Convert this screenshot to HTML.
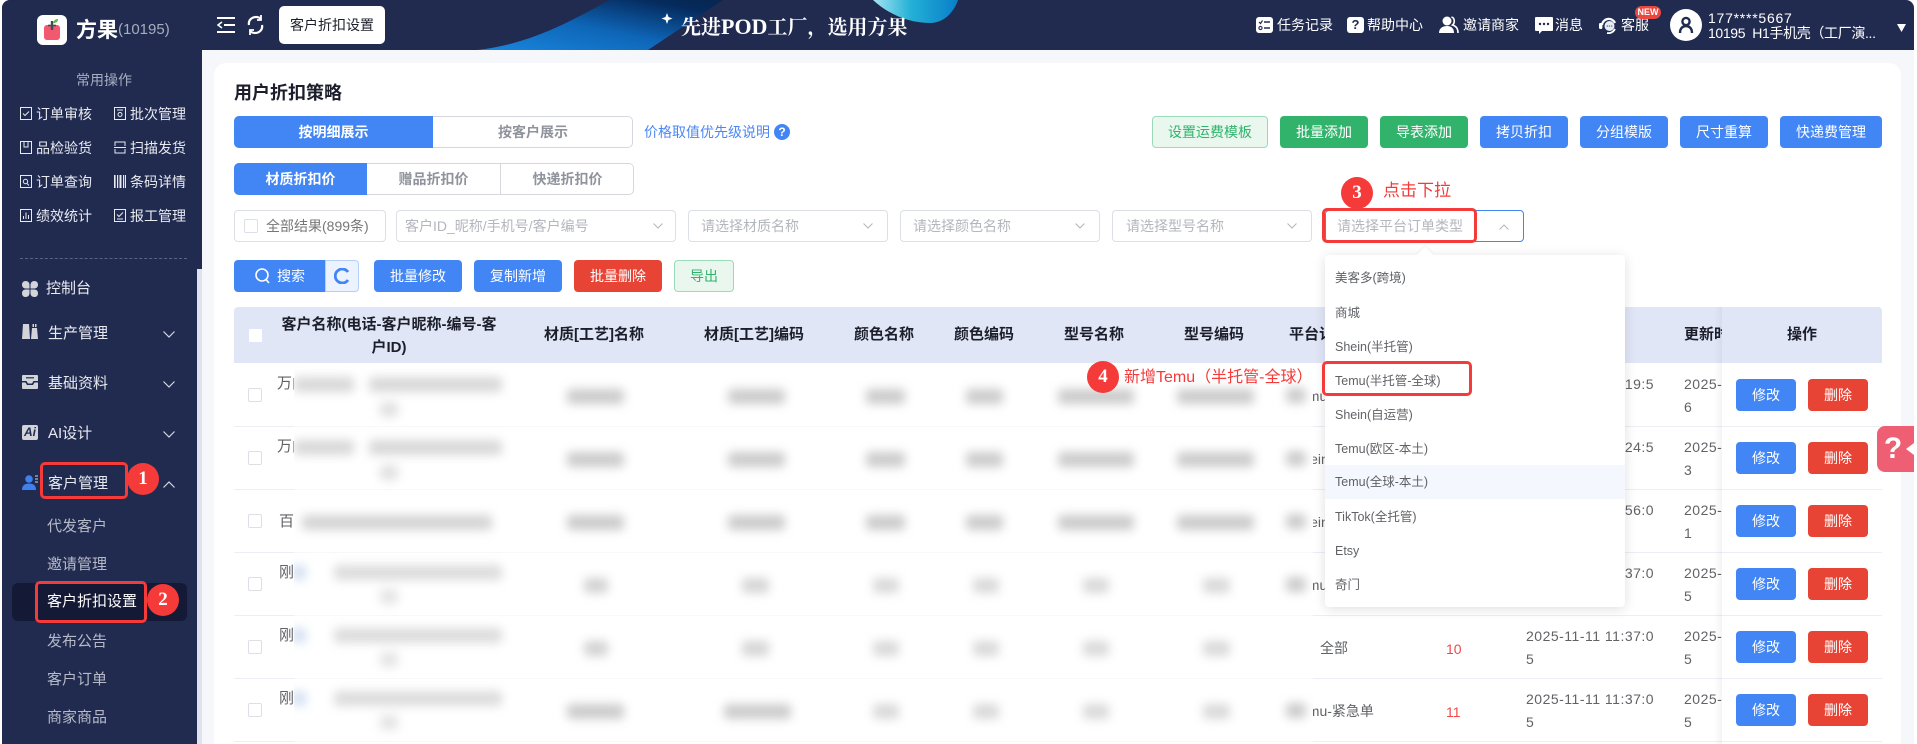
<!DOCTYPE html>
<html lang="zh-CN">
<head>
<meta charset="utf-8">
<title>客户折扣设置</title>
<style>
*{box-sizing:border-box}
html,body{margin:0;padding:0;background:#fff}
body{width:1917px;height:744px;overflow:hidden;position:relative;font-family:"Liberation Sans","Noto Sans CJK SC",sans-serif;font-size:14px;color:#606266}
div,span,svg{position:absolute}
span.in{position:static}
.t{position:absolute;line-height:20px;white-space:nowrap}
.w{color:#fff}
.q{color:#e8eaf0;font-size:14px}
.m{color:#e8eaf0;font-size:15px}
.s{color:#b6bac8;font-size:15px}
.btn{position:absolute;height:32px;line-height:32px;text-align:center;color:#fff;border-radius:4px;font-size:14px;white-space:nowrap}
.bl{background:#4285f4}
.gr{background:#31b36b}
.re{background:#e84435}
.lg{background:#e9f7ef;border:1px solid #9bdab9;color:#31b36b;line-height:30px}
.sel{position:absolute;height:32px;top:210px;background:#fff;border:1px solid #dcdfe6;border-radius:4px}
.ph{color:#b3b6bd;font-size:14px}
.th{position:absolute;top:325px;line-height:20px;font-size:15px;font-weight:700;color:#1c1f2b;white-space:nowrap;text-align:center}
.cb{position:absolute;left:248px;width:14px;height:14px;background:#fff;border:1px solid #dcdfe6;border-radius:2px}
.ln{position:absolute;height:1px;background:#ebeef5}
.f{position:absolute;left:294px;width:1019px;height:1px;background:#f8f8fa}
.b{position:absolute;height:15px;background:#cbcbcb;filter:blur(5px);border-radius:4px}
.rb{position:absolute;border:3.5px solid #f53a3a;border-radius:5px;z-index:30}
.c{position:absolute;width:32px;height:32px;border-radius:50%;background:#f53a3a;color:#fff;text-align:center;line-height:32px;font-family:"Liberation Serif",serif;font-weight:700;font-size:19px;z-index:31}
.ann{position:absolute;color:#f53a3a;white-space:nowrap;line-height:22px;z-index:31}
.it{position:absolute;left:0;width:300px;height:34px;line-height:34px;padding-left:10px;font-size:12.5px;color:#606266;white-space:nowrap}
.date{position:absolute;font-size:14px;letter-spacing:.5px;line-height:20px;white-space:nowrap}
</style>
</head>
<body>

<!-- page background -->
<div style="left:202px;top:50px;width:1712px;height:694px;background:#f5f7fb"></div>
<div style="left:214px;top:63px;width:1687px;height:681px;background:#fff;border-radius:12px 12px 0 0"></div>

<!-- top bar -->
<div style="left:2px;top:0;width:1912px;height:50px;background:#212b50;border-radius:8px 8px 0 0;overflow:hidden">
  <svg style="left:0;top:0" width="1912" height="50" viewBox="0 0 1912 50">
    <defs>
      <linearGradient id="g1" x1="0" y1="1" x2="1" y2="0">
        <stop offset="0" stop-color="#1a86dc"/><stop offset=".45" stop-color="#0e66b8"/><stop offset=".85" stop-color="#052a5c"/><stop offset="1" stop-color="#08264f"/>
      </linearGradient>
      <linearGradient id="g2" x1="0" y1="0" x2="1" y2="0">
        <stop offset="0" stop-color="#a6e4f0"/><stop offset=".45" stop-color="#22b0d6"/><stop offset="1" stop-color="#0a7ec8"/>
      </linearGradient>
    </defs>
    <path d="M475 50C530 44 570 20 608 0H721L646 50Z" fill="url(#g1)"/>
    <path d="M871 0C885 13 905 23 928 23C942 23 952 12 956 0Z" fill="url(#g2)"/>
    <path d="M665 13L666.5 17L670.5 18.5L666.5 20L665 24L663.5 20L659.5 18.5L663.5 17Z" fill="#fff"/>
  </svg>
</div>

<!-- sidebar -->
<div style="left:2px;top:0;width:200px;height:744px;background:#212b50;border-radius:8px 0 0 0"></div>
<div style="left:197px;top:269px;width:5px;height:475px;background:#dfe3ee"></div>

<!-- logo -->
<div style="left:37px;top:15px;width:30px;height:30px;background:#fff;border-radius:6px"></div>
<svg style="left:37px;top:15px" width="30" height="30" viewBox="0 0 30 30">
  <rect x="7" y="10" width="16" height="15" rx="3" fill="#f2596e"/>
  <path d="M15 6V15" stroke="#444b5c" stroke-width="2.4"/>
  <path d="M11 10.5H19" stroke="#444b5c" stroke-width="1.6"/>
  <path d="M16 8C17 5 19 4 21 4C21 7 19 8 16 8Z" fill="#5fb548"/>
</svg>
<div class="t w" style="left:76px;top:18px;font-size:21px;font-weight:700;line-height:26px">方果</div>
<div class="t" style="left:118px;top:20px;font-size:15px;color:#a8adbc">(10195)</div>

<!-- top left tools -->
<svg style="left:217px;top:16px" width="19" height="18" viewBox="0 0 19 18" fill="none" stroke="#fff" stroke-width="2">
  <path d="M0 2H18M7 9H18M0 16H18"/><path d="M5 6L1 9L5 12" stroke-width="1.6"/>
</svg>
<svg style="left:246px;top:15px" width="19" height="20" viewBox="0 0 19 20" fill="none" stroke="#fff" stroke-width="2.2">
  <path d="M3 10C2 5 6 2 10 2C12 2 14 3 15 4"/><path d="M16 10C17 15 13 18 9 18C7 18 5 17 4 16"/>
  <path d="M15 0V5H11" stroke-width="1.8"/><path d="M4 20V15H8" stroke-width="1.8"/>
</svg>
<div style="left:279px;top:6px;width:106px;height:38px;background:#fff;border-radius:5px"></div>
<div class="t" style="left:279px;top:15px;width:106px;text-align:center;color:#1c1f2b;font-size:14px">客户折扣设置</div>

<!-- banner title -->
<div class="t w" style="left:681px;top:13px;font-family:'Liberation Serif','Noto Serif CJK SC',serif;font-weight:700;font-size:20px;line-height:28px">先进<span class="in" style="font-size:22px">POD</span>工厂，选用方果</div>

<!-- top right -->
<svg style="left:1256px;top:17px" width="17" height="16" viewBox="0 0 17 16">
  <rect width="17" height="16" rx="3" fill="#fff"/>
  <path d="M8 5H14M8 11H14" stroke="#212b50" stroke-width="1.4"/>
  <path d="M3 5L4.5 6.5L6.5 3.5" stroke="#212b50" stroke-width="1.2" fill="none"/>
  <circle cx="4.5" cy="11" r="1.6" fill="none" stroke="#212b50" stroke-width="1.1"/>
</svg>
<div class="t w" style="left:1277px;top:15px">任务记录</div>
<div style="left:1347px;top:17px;width:17px;height:16px;background:#fff;border-radius:3px;color:#212b50;font-weight:700;font-size:13px;line-height:16px;text-align:center">?</div>
<div class="t w" style="left:1367px;top:15px">帮助中心</div>
<svg style="left:1439px;top:16px" width="20" height="17" viewBox="0 0 20 17">
  <circle cx="8" cy="5" r="4.5" fill="#fff"/><path d="M0 17C0 12 4 10 8 10C12 10 15 12 15 17Z" fill="#fff"/>
  <path d="M12.5 1C16 2 16 7 13.5 9C17 10 19 13 19 17" fill="none" stroke="#fff" stroke-width="1.6"/>
</svg>
<div class="t w" style="left:1463px;top:15px">邀请商家</div>
<svg style="left:1535px;top:17px" width="18" height="17" viewBox="0 0 18 17">
  <path d="M1 0H17A1 1 0 0 1 18 1V13A1 1 0 0 1 17 14H7L4 17V14H1A1 1 0 0 1 0 13V1A1 1 0 0 1 1 0Z" fill="#fff"/>
  <circle cx="5" cy="7" r="1.2" fill="#212b50"/><circle cx="9" cy="7" r="1.2" fill="#212b50"/><circle cx="13" cy="7" r="1.2" fill="#212b50"/>
</svg>
<div class="t w" style="left:1555px;top:15px">消息</div>
<svg style="left:1599px;top:17px" width="19" height="17" viewBox="0 0 19 17" fill="none">
  <path d="M3 8A6.8 6.8 0 0 1 16 6" stroke="#fff" stroke-width="2.2"/>
  <circle cx="10.5" cy="9" r="5" fill="#e6ebf5"/>
  <rect x="0" y="6" width="3.4" height="6" rx="1.2" fill="#fff"/>
  <path d="M8 16C11 16.5 14 15.5 16 12" stroke="#fff" stroke-width="1.8"/>
  <circle cx="8.3" cy="9" r=".8" fill="#6a7598"/><circle cx="10.5" cy="9" r=".8" fill="#6a7598"/><circle cx="12.7" cy="9" r=".8" fill="#6a7598"/>
</svg>
<div class="t w" style="left:1621px;top:15px">客服</div>
<div style="left:1635px;top:6px;width:26px;height:13px;background:#e9473f;border-radius:7px;color:#fff;font-size:9px;font-weight:700;line-height:13px;text-align:center">NEW</div>
<div style="left:1670px;top:9px;width:32px;height:32px;background:#fff;border-radius:50%"></div>
<svg style="left:1678px;top:16px" width="16" height="18" viewBox="0 0 16 18" fill="none" stroke="#212b50" stroke-width="2.4">
  <circle cx="8" cy="5.5" r="3.6"/><path d="M2 17C2 12 5 10 8 10C11 10 14 12 14 17"/>
</svg>
<div class="t w" style="left:1708px;top:8px;font-size:14px;letter-spacing:.75px">177****5667</div>
<div class="t w" style="left:1708px;top:23px;font-size:14px;letter-spacing:-.35px">10195&nbsp; H1手机壳（工厂演...</div>
<svg style="left:1897px;top:24px" width="9" height="8" viewBox="0 0 9 8"><path d="M0 0H9L4.5 8Z" fill="#fff"/></svg>

<!-- quick ops -->
<div class="t" style="left:76px;top:70px;color:#a9aec0;font-size:14px">常用操作</div>
<svg style="left:20px;top:107px" width="12" height="13" viewBox="0 0 12 13" fill="none" stroke="#e8eaf0"><rect x=".5" y=".5" width="11" height="12"/><path d="M3 6.5L5 8.5L9 4.5"/></svg>
<div class="t q" style="left:36px;top:104px">订单审核</div>
<svg style="left:114px;top:107px" width="12" height="13" viewBox="0 0 12 13" fill="none" stroke="#e8eaf0"><rect x=".5" y=".5" width="11" height="12"/><path d="M3 3H9"/><circle cx="6" cy="7.5" r="2"/></svg>
<div class="t q" style="left:130px;top:104px">批次管理</div>
<svg style="left:20px;top:141px" width="12" height="13" viewBox="0 0 12 13" fill="none" stroke="#e8eaf0"><rect x=".5" y=".5" width="11" height="12"/><path d="M4 1V6H8V1"/></svg>
<div class="t q" style="left:36px;top:138px">品检验货</div>
<svg style="left:114px;top:141px" width="12" height="13" viewBox="0 0 12 13" fill="none" stroke="#e8eaf0"><path d="M1 5V1H11V5M1 8V12H11V8M0 6.5H12"/></svg>
<div class="t q" style="left:130px;top:138px">扫描发货</div>
<svg style="left:20px;top:175px" width="12" height="13" viewBox="0 0 12 13" fill="none" stroke="#e8eaf0"><rect x=".5" y=".5" width="11" height="12"/><circle cx="5.5" cy="6.5" r="2.2"/><path d="M7 8.5L9 10.5"/></svg>
<div class="t q" style="left:36px;top:172px">订单查询</div>
<svg style="left:114px;top:175px" width="12" height="13" viewBox="0 0 12 13" fill="#e8eaf0"><rect x="0" y="0" width="1.6" height="13"/><rect x="3" y="0" width="1.2" height="13"/><rect x="5.5" y="0" width="2" height="13"/><rect x="9" y="0" width="1.2" height="13"/><rect x="11" y="0" width="1" height="13"/></svg>
<div class="t q" style="left:130px;top:172px">条码详情</div>
<svg style="left:20px;top:209px" width="12" height="13" viewBox="0 0 12 13" fill="none" stroke="#e8eaf0"><rect x=".5" y=".5" width="11" height="12"/><path d="M3.5 10V7M6 10V3.5M8.5 10V6"/></svg>
<div class="t q" style="left:36px;top:206px">绩效统计</div>
<svg style="left:114px;top:209px" width="12" height="13" viewBox="0 0 12 13" fill="none" stroke="#e8eaf0"><rect x=".5" y=".5" width="11" height="12"/><path d="M3 5.5L5 7.5L9 3.5M3 10H9"/></svg>
<div class="t q" style="left:130px;top:206px">报工管理</div>
<div style="left:20px;top:258px;width:167px;height:0;border-top:1px dashed #5b6382"></div>

<!-- menu -->
<svg style="left:22px;top:281px" width="16" height="16" viewBox="0 0 16 16" fill="#d3d4da"><path d="M3.5 0C6 0 7.5 1.5 7.5 4V7.5H3.5C1.5 7.5 0 6 0 3.8C0 1.5 1.5 0 3.5 0Z"/><path d="M12.5 0C10 0 8.5 1.5 8.5 4V7.5H12.5C14.5 7.5 16 6 16 3.8C16 1.5 14.5 0 12.5 0Z"/><path d="M3.5 16C6 16 7.5 14.5 7.5 12V8.5H3.5C1.5 8.5 0 10 0 12.2C0 14.5 1.5 16 3.5 16Z"/><path d="M12.5 16C10 16 8.5 14.5 8.5 12V8.5H12.5C14.5 8.5 16 10 16 12.2C16 14.5 14.5 16 12.5 16Z"/></svg>
<div class="t m" style="left:46px;top:279px">控制台</div>
<svg style="left:22px;top:324px" width="16" height="15" viewBox="0 0 16 15" fill="#d3d4da"><path d="M1 0H7L8 15H0Z"/><path d="M10 4H15L16 15H9Z"/><rect x="10.5" y="0" width="1.5" height="3"/><rect x="13" y="0" width="1.5" height="3"/></svg>
<div class="t m" style="left:48px;top:324px">生产管理</div>
<svg style="left:22px;top:375px" width="16" height="14" viewBox="0 0 16 14"><rect width="16" height="14" fill="#d3d4da" rx="1"/><path d="M0 6H4.5L6 8.5H10L11.5 6H16V7.5H12.5L11 10H5L3.5 7.5H0Z" fill="#212b50"/><path d="M4 2.8H12" stroke="#212b50" stroke-width="1.2"/></svg>
<div class="t m" style="left:48px;top:374px">基础资料</div>
<div style="left:22px;top:425px;width:16px;height:15px;background:#d3d4da;border-radius:2px;color:#212b50;font-size:12px;line-height:15px;font-weight:700;font-style:italic;text-align:center">Ai</div>
<div class="t m" style="left:48px;top:424px">AI设计</div>
<svg style="left:22px;top:475px" width="16" height="15" viewBox="0 0 16 15" fill="#3f7fee"><circle cx="7" cy="4" r="3.8"/><path d="M0 15C0 10 3 8.5 7 8.5C11 8.5 14 10 14 15Z"/><path d="M13 1H16M13 4H16M13 7H16" stroke="#d3d4da" stroke-width="1"/></svg>
<div class="t m" style="left:48px;top:474px">客户管理</div>
<svg style="left:163px;top:331px" width="12" height="7" viewBox="0 0 12 7" fill="none" stroke="#d5d7df" stroke-width="1.2"><path d="M.5 .5L6 6L11.5 .5"/></svg>
<svg style="left:163px;top:381px" width="12" height="7" viewBox="0 0 12 7" fill="none" stroke="#d5d7df" stroke-width="1.2"><path d="M.5 .5L6 6L11.5 .5"/></svg>
<svg style="left:163px;top:431px" width="12" height="7" viewBox="0 0 12 7" fill="none" stroke="#d5d7df" stroke-width="1.2"><path d="M.5 .5L6 6L11.5 .5"/></svg>
<svg style="left:163px;top:481px" width="12" height="7" viewBox="0 0 12 7" fill="none" stroke="#d5d7df" stroke-width="1.2"><path d="M.5 6.5L6 1L11.5 6.5"/></svg>
<div class="t s" style="left:47px;top:517px">代发客户</div>
<div class="t s" style="left:47px;top:555px">邀请管理</div>
<div style="left:12px;top:583px;width:175px;height:38px;background:#141a36;border-radius:6px"></div>
<div class="t w" style="left:47px;top:592px;font-size:15px">客户折扣设置</div>
<div class="t s" style="left:47px;top:632px">发布公告</div>
<div class="t s" style="left:47px;top:670px">客户订单</div>
<div class="t s" style="left:47px;top:708px">商家商品</div>

<!-- heading -->
<div class="t" style="left:234px;top:83px;font-size:18px;font-weight:700;color:#1c1f2b">用户折扣策略</div>

<!-- toggle 1 -->
<div style="left:234px;top:116px;width:399px;height:32px;border:1px solid #d6d8de;border-radius:5px"></div>
<div style="left:234px;top:116px;width:199px;height:32px;background:#4285f4;border-radius:5px 0 0 5px;color:#fff;text-align:center;line-height:32px;font-weight:700">按明细展示</div>
<div style="left:433px;top:116px;width:200px;height:32px;color:#8f939b;text-align:center;line-height:32px;font-weight:700">按客户展示</div>

<!-- toggle 2 -->
<div style="left:234px;top:163px;width:400px;height:32px;border:1px solid #d6d8de;border-radius:5px"></div>
<div style="left:234px;top:163px;width:133px;height:32px;background:#4285f4;border-radius:5px 0 0 5px;color:#fff;text-align:center;line-height:32px;font-weight:700">材质折扣价</div>
<div style="left:367px;top:163px;width:134px;height:32px;border-right:1px solid #d6d8de;color:#8f939b;text-align:center;line-height:32px;font-weight:700">赠品折扣价</div>
<div style="left:501px;top:163px;width:133px;height:32px;color:#8f939b;text-align:center;line-height:32px;font-weight:700">快递折扣价</div>

<div class="t" style="left:644px;top:122px;color:#4d87f5">价格取值优先级说明</div>
<div style="left:774px;top:124px;width:16px;height:16px;border-radius:50%;background:#4285f4;color:#fff;font-size:12px;font-weight:700;line-height:16px;text-align:center">?</div>

<!-- right buttons -->
<div class="btn lg" style="left:1152px;top:116px;width:116px">设置运费模板</div>
<div class="btn gr" style="left:1280px;top:116px;width:88px">批量添加</div>
<div class="btn gr" style="left:1380px;top:116px;width:88px">导表添加</div>
<div class="btn bl" style="left:1480px;top:116px;width:88px">拷贝折扣</div>
<div class="btn bl" style="left:1580px;top:116px;width:88px">分组模版</div>
<div class="btn bl" style="left:1680px;top:116px;width:88px">尺寸重算</div>
<div class="btn bl" style="left:1780px;top:116px;width:102px">快递费管理</div>

<!-- filters -->
<div class="sel" style="left:234px;width:152px"></div>
<div style="left:244px;top:219px;width:14px;height:14px;border:1px solid #dcdfe6;border-radius:2px"></div>
<div class="t" style="left:266px;top:216px;font-size:14px;color:#777">全部结果(899条)</div>
<div class="sel" style="left:396px;width:280px"></div>
<div class="t ph" style="left:405px;top:216px">客户ID_昵称/手机号/客户编号</div>
<div class="sel" style="left:688px;width:200px"></div>
<div class="t ph" style="left:701px;top:216px">请选择材质名称</div>
<div class="sel" style="left:900px;width:200px"></div>
<div class="t ph" style="left:913px;top:216px">请选择颜色名称</div>
<div class="sel" style="left:1112px;width:200px"></div>
<div class="t ph" style="left:1126px;top:216px">请选择型号名称</div>
<div class="sel" style="left:1325px;width:199px;border-color:#4285f4"></div>
<div class="t ph" style="left:1337px;top:216px">请选择平台订单类型</div>
<svg style="left:653px;top:223px" width="10" height="6" viewBox="0 0 10 6" fill="none" stroke="#b3b6bd"><path d="M.5 .5L5 5L9.5 .5"/></svg>
<svg style="left:863px;top:223px" width="10" height="6" viewBox="0 0 10 6" fill="none" stroke="#b3b6bd"><path d="M.5 .5L5 5L9.5 .5"/></svg>
<svg style="left:1075px;top:223px" width="10" height="6" viewBox="0 0 10 6" fill="none" stroke="#b3b6bd"><path d="M.5 .5L5 5L9.5 .5"/></svg>
<svg style="left:1287px;top:223px" width="10" height="6" viewBox="0 0 10 6" fill="none" stroke="#b3b6bd"><path d="M.5 .5L5 5L9.5 .5"/></svg>
<svg style="left:1499px;top:224px" width="10" height="6" viewBox="0 0 10 6" fill="none" stroke="#b3b6bd"><path d="M.5 5.5L5 1L9.5 5.5"/></svg>

<!-- action row -->
<div style="left:234px;top:260px;width:91px;height:32px;background:#4285f4;border-radius:4px 0 0 4px"></div>
<svg style="left:255px;top:268px" width="16" height="17" viewBox="0 0 16 17" fill="none" stroke="#fff" stroke-width="1.6"><circle cx="7" cy="7" r="6"/><path d="M11 11.5L14 15"/></svg>
<div class="t w" style="left:277px;top:266px">搜索</div>
<div style="left:325px;top:260px;width:34px;height:32px;background:#ecf3fe;border:1px solid #b4cefa;border-radius:0 4px 4px 0"></div>
<svg style="left:334px;top:268px" width="16" height="16" viewBox="0 0 16 16" fill="none" stroke="#4285f4" stroke-width="2.8"><path d="M14 4A7 7 0 1 0 14 12"/></svg>
<div class="btn bl" style="left:374px;top:260px;width:88px">批量修改</div>
<div class="btn bl" style="left:474px;top:260px;width:88px">复制新增</div>
<div class="btn re" style="left:574px;top:260px;width:88px">批量删除</div>
<div class="btn lg" style="left:674px;top:260px;width:60px">导出</div>

<!-- table header -->
<div style="left:234px;top:307px;width:1648px;height:56px;background:#e1e6f6;border-radius:4px 4px 0 0"></div>
<div style="left:249px;top:329px;width:13px;height:13px;background:#fff;border-radius:1px"></div>
<div class="th" style="left:269px;top:313px;width:240px;line-height:23px;font-size:15px">客户名称(电话-客户昵称-编号-客<br>户ID)</div>
<div class="th" style="left:534px;width:120px">材质[工艺]名称</div>
<div class="th" style="left:694px;width:120px">材质[工艺]编码</div>
<div class="th" style="left:844px;width:80px">颜色名称</div>
<div class="th" style="left:944px;width:80px">颜色编码</div>
<div class="th" style="left:1054px;width:80px">型号名称</div>
<div class="th" style="left:1174px;width:80px">型号编码</div>
<div class="th" style="left:1289px;text-align:left">平台订单类型</div>
<div class="th" style="left:1684px;width:38px;overflow:hidden;text-align:left">更新时间</div>

<!-- row separators -->
<div class="ln" style="left:234px;top:426px;width:60px"></div>
<div class="ln" style="left:234px;top:489px;width:60px"></div>
<div class="ln" style="left:234px;top:552px;width:60px"></div>
<div class="ln" style="left:234px;top:615px;width:60px"></div>
<div class="ln" style="left:234px;top:678px;width:60px"></div>
<div class="ln" style="left:234px;top:741px;width:60px"></div>
<div class="ln" style="left:1313px;top:426px;width:569px"></div>
<div class="ln" style="left:1313px;top:489px;width:569px"></div>
<div class="ln" style="left:1313px;top:552px;width:569px"></div>
<div class="ln" style="left:1313px;top:615px;width:569px"></div>
<div class="ln" style="left:1313px;top:678px;width:569px"></div>
<div class="ln" style="left:1313px;top:741px;width:569px"></div>
<div class="f" style="top:426px"></div>
<div class="f" style="top:489px"></div>
<div class="f" style="top:552px"></div>
<div class="f" style="top:615px"></div>
<div class="f" style="top:678px"></div>
<div class="f" style="top:741px"></div>

<!-- checkboxes -->
<div class="cb" style="top:388px"></div>
<div class="cb" style="top:451px"></div>
<div class="cb" style="top:514px"></div>
<div class="cb" style="top:577px"></div>
<div class="cb" style="top:640px"></div>
<div class="cb" style="top:703px"></div>

<!-- first column clipped text -->
<div class="t" style="left:277px;top:374px;width:17px;overflow:hidden;font-size:15px">万向</div>
<div class="t" style="left:277px;top:437px;width:17px;overflow:hidden;font-size:15px">万向</div>
<div class="t" style="left:279px;top:512px;width:15px;overflow:hidden;font-size:15px">百</div>
<div class="t" style="left:279px;top:563px;width:15px;overflow:hidden;font-size:15px">刚</div>
<div class="t" style="left:279px;top:626px;width:15px;overflow:hidden;font-size:15px">刚</div>
<div class="t" style="left:279px;top:689px;width:15px;overflow:hidden;font-size:15px">刚</div>

<!-- blurred data -->
<div style="left:294px;top:364px;width:1019px;height:377px;overflow:hidden">
  <div class="b" style="left:0;top:13px;width:60px;background:#d8d8d8"></div>
  <div class="b" style="left:75px;top:13px;width:133px;background:#d8d8d8"></div>
  <div class="b" style="left:86px;top:38px;width:18px;background:#e0e0e0"></div>
  <div class="b" style="left:273px;top:25px;width:57px"></div>
  <div class="b" style="left:434px;top:25px;width:57px"></div>
  <div class="b" style="left:572px;top:25px;width:39px"></div>
  <div class="b" style="left:672px;top:25px;width:37px"></div>
  <div class="b" style="left:764px;top:25px;width:76px"></div>
  <div class="b" style="left:883px;top:25px;width:77px"></div>
  <div class="b" style="left:992px;top:24px;width:20px"></div>

  <div class="b" style="left:0;top:76px;width:60px;background:#d8d8d8"></div>
  <div class="b" style="left:75px;top:76px;width:133px;background:#d8d8d8"></div>
  <div class="b" style="left:86px;top:101px;width:18px;background:#e0e0e0"></div>
  <div class="b" style="left:273px;top:88px;width:57px"></div>
  <div class="b" style="left:434px;top:88px;width:57px"></div>
  <div class="b" style="left:572px;top:88px;width:39px"></div>
  <div class="b" style="left:672px;top:88px;width:37px"></div>
  <div class="b" style="left:764px;top:88px;width:76px"></div>
  <div class="b" style="left:883px;top:88px;width:77px"></div>
  <div class="b" style="left:992px;top:87px;width:20px"></div>

  <div class="b" style="left:8px;top:151px;width:190px;background:#d4d4d4"></div>
  <div class="b" style="left:273px;top:151px;width:57px"></div>
  <div class="b" style="left:434px;top:151px;width:57px"></div>
  <div class="b" style="left:572px;top:151px;width:39px"></div>
  <div class="b" style="left:672px;top:151px;width:37px"></div>
  <div class="b" style="left:764px;top:151px;width:76px"></div>
  <div class="b" style="left:883px;top:151px;width:77px"></div>
  <div class="b" style="left:992px;top:150px;width:20px"></div>

  <div class="b" style="left:-2px;top:201px;width:14px;background:#d3dff2"></div>
  <div class="b" style="left:40px;top:201px;width:168px;background:#dcdcdc"></div>
  <div class="b" style="left:86px;top:225px;width:18px;background:#e4e4e4"></div>
  <div class="b" style="left:290px;top:214px;width:24px;background:#d2d2d2"></div>
  <div class="b" style="left:448px;top:214px;width:27px;background:#d5d5d5"></div>
  <div class="b" style="left:579px;top:214px;width:26px;background:#d9d9d9"></div>
  <div class="b" style="left:679px;top:214px;width:26px;background:#d9d9d9"></div>
  <div class="b" style="left:789px;top:214px;width:26px;background:#d9d9d9"></div>
  <div class="b" style="left:909px;top:214px;width:27px;background:#d9d9d9"></div>
  <div class="b" style="left:992px;top:213px;width:20px"></div>

  <div class="b" style="left:-2px;top:264px;width:14px;background:#d3dff2"></div>
  <div class="b" style="left:40px;top:264px;width:168px;background:#dcdcdc"></div>
  <div class="b" style="left:86px;top:288px;width:18px;background:#e4e4e4"></div>
  <div class="b" style="left:290px;top:277px;width:24px;background:#d2d2d2"></div>
  <div class="b" style="left:448px;top:277px;width:27px;background:#d5d5d5"></div>
  <div class="b" style="left:579px;top:277px;width:26px;background:#d9d9d9"></div>
  <div class="b" style="left:679px;top:277px;width:26px;background:#d9d9d9"></div>
  <div class="b" style="left:789px;top:277px;width:26px;background:#d9d9d9"></div>
  <div class="b" style="left:909px;top:277px;width:27px;background:#d9d9d9"></div>

  <div class="b" style="left:-2px;top:327px;width:14px;background:#d3dff2"></div>
  <div class="b" style="left:40px;top:327px;width:168px;background:#dcdcdc"></div>
  <div class="b" style="left:86px;top:351px;width:18px;background:#e4e4e4"></div>
  <div class="b" style="left:273px;top:340px;width:57px"></div>
  <div class="b" style="left:430px;top:340px;width:67px;background:#cccccc"></div>
  <div class="b" style="left:579px;top:340px;width:26px;background:#d9d9d9"></div>
  <div class="b" style="left:679px;top:340px;width:26px;background:#d9d9d9"></div>
  <div class="b" style="left:789px;top:340px;width:26px;background:#d9d9d9"></div>
  <div class="b" style="left:909px;top:340px;width:27px;background:#d9d9d9"></div>
  <div class="b" style="left:992px;top:339px;width:20px"></div>
</div>

<!-- platform col, clipped left -->
<div style="left:1313px;top:386px;width:14px;height:20px;overflow:hidden;line-height:20px"><span style="left:-20px;top:0;white-space:nowrap">Temu</span></div>
<div style="left:1313px;top:449px;width:14px;height:20px;overflow:hidden;line-height:20px"><span style="left:-20px;top:0;white-space:nowrap">Shein</span></div>
<div style="left:1313px;top:512px;width:14px;height:20px;overflow:hidden;line-height:20px"><span style="left:-20px;top:0;white-space:nowrap">Shein</span></div>
<div style="left:1313px;top:575px;width:14px;height:20px;overflow:hidden;line-height:20px"><span style="left:-20px;top:0;white-space:nowrap">Temu</span></div>
<div class="t" style="left:1320px;top:638px">全部</div>
<div style="left:1313px;top:701px;width:80px;height:20px;overflow:hidden;line-height:20px"><span style="left:-20px;top:0;white-space:nowrap">Temu-紧急单</span></div>
<div class="t" style="left:1446px;top:639px;color:#f04848">10</div>
<div class="t" style="left:1446px;top:702px;color:#f04848">11</div>

<!-- create time -->
<div class="date" style="left:1526px;top:374px">2025-11-11 11:19:5</div>
<div class="date" style="left:1526px;top:437px">2025-11-11 11:24:5</div>
<div class="date" style="left:1526px;top:500px">2025-11-11 11:56:0</div>
<div class="date" style="left:1526px;top:563px">2025-11-11 11:37:0</div>
<div class="date" style="left:1526px;top:626px">2025-11-11 11:37:0</div>
<div class="date" style="left:1526px;top:649px">5</div>
<div class="date" style="left:1526px;top:689px">2025-11-11 11:37:0</div>
<div class="date" style="left:1526px;top:712px">5</div>

<!-- update time -->
<div class="date" style="left:1684px;top:374px">2025-</div><div class="date" style="left:1684px;top:397px">6</div>
<div class="date" style="left:1684px;top:437px">2025-</div><div class="date" style="left:1684px;top:460px">3</div>
<div class="date" style="left:1684px;top:500px">2025-</div><div class="date" style="left:1684px;top:523px">1</div>
<div class="date" style="left:1684px;top:563px">2025-</div><div class="date" style="left:1684px;top:586px">5</div>
<div class="date" style="left:1684px;top:626px">2025-</div><div class="date" style="left:1684px;top:649px">5</div>
<div class="date" style="left:1684px;top:689px">2025-</div><div class="date" style="left:1684px;top:712px">5</div>

<!-- fixed right col -->
<div style="left:1714px;top:307px;width:8px;height:437px;background:linear-gradient(90deg,rgba(0,0,0,0),rgba(0,0,0,.045))"></div>
<div style="left:1722px;top:307px;width:160px;height:56px;background:#e1e6f6;border-radius:0 4px 0 0"></div>
<div style="left:1722px;top:363px;width:160px;height:381px;background:#fff"></div>
<div class="ln" style="left:1722px;top:426px;width:160px"></div>
<div class="ln" style="left:1722px;top:489px;width:160px"></div>
<div class="ln" style="left:1722px;top:552px;width:160px"></div>
<div class="ln" style="left:1722px;top:615px;width:160px"></div>
<div class="ln" style="left:1722px;top:678px;width:160px"></div>
<div class="ln" style="left:1722px;top:741px;width:160px"></div>
<div class="th" style="left:1722px;width:160px">操作</div>
<div class="btn bl" style="left:1736px;top:379px;width:60px">修改</div><div class="btn re" style="left:1808px;top:379px;width:60px">删除</div>
<div class="btn bl" style="left:1736px;top:442px;width:60px">修改</div><div class="btn re" style="left:1808px;top:442px;width:60px">删除</div>
<div class="btn bl" style="left:1736px;top:505px;width:60px">修改</div><div class="btn re" style="left:1808px;top:505px;width:60px">删除</div>
<div class="btn bl" style="left:1736px;top:568px;width:60px">修改</div><div class="btn re" style="left:1808px;top:568px;width:60px">删除</div>
<div class="btn bl" style="left:1736px;top:631px;width:60px">修改</div><div class="btn re" style="left:1808px;top:631px;width:60px">删除</div>
<div class="btn bl" style="left:1736px;top:694px;width:60px">修改</div><div class="btn re" style="left:1808px;top:694px;width:60px">删除</div>

<!-- floating help -->
<div style="left:1877px;top:426px;width:37px;height:46px;background:#ee5f73;border-radius:8px 0 0 8px;z-index:10"></div>
<div style="left:1881px;top:429px;width:24px;height:40px;color:#fff;font-size:30px;font-weight:700;line-height:40px;text-align:center;z-index:11">?</div>
<svg style="left:1906px;top:443px;z-index:11" width="8" height="12" viewBox="0 0 8 12"><path d="M8 0L0 6L8 12Z" fill="#fff"/></svg>

<!-- dropdown -->
<div style="left:1325px;top:255px;width:300px;height:352px;background:#fff;border-radius:4px;box-shadow:0 2px 12px rgba(0,0,0,.13);z-index:20">
  <div style="left:94px;top:-6px;width:12px;height:12px;background:#fff;transform:rotate(45deg);box-shadow:-1px -1px 2px rgba(0,0,0,.05)"></div>
  <div class="it" style="top:6px">美客多(跨境)</div>
  <div class="it" style="top:41px">商城</div>
  <div class="it" style="top:75px">Shein(半托管)</div>
  <div class="it" style="top:109px">Temu(半托管-全球)</div>
  <div class="it" style="top:143px">Shein(自运营)</div>
  <div class="it" style="top:177px">Temu(欧区-本土)</div>
  <div class="it" style="top:210px;background:#f5f7fe">Temu(全球-本土)</div>
  <div class="it" style="top:245px">TikTok(全托管)</div>
  <div class="it" style="top:279px">Etsy</div>
  <div class="it" style="top:313px">奇门</div>
</div>

<!-- annotations -->
<div class="rb" style="left:40px;top:462px;width:88px;height:37px"></div>
<div class="c" style="left:127px;top:463px">1</div>
<div class="rb" style="left:35px;top:581px;width:112px;height:42px"></div>
<div class="c" style="left:147px;top:584px">2</div>
<div class="rb" style="left:1322px;top:208px;width:155px;height:35px"></div>
<div class="c" style="left:1341px;top:177px">3</div>
<div class="ann" style="left:1383px;top:180px;font-size:17px">点击下拉</div>
<div class="rb" style="left:1322px;top:361px;width:150px;height:35px"></div>
<div class="c" style="left:1087px;top:361px">4</div>
<div class="ann" style="left:1124px;top:367px;font-size:16px">新增Temu（半托管-全球）</div>

</body>
</html>
